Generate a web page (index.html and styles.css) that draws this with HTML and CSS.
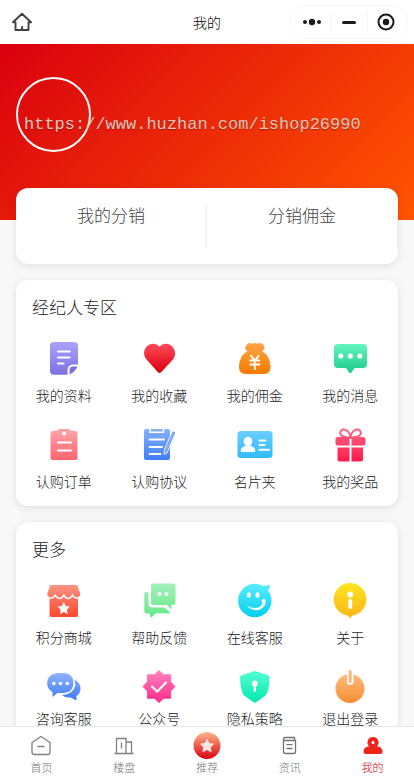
FILE: index.html
```
<!DOCTYPE html>
<html lang="zh-CN">
<head>
  <meta charset="UTF-8">
  <meta name="viewport" content="width=device-width, initial-scale=1.0">
  <title>我的</title>
  <link rel="stylesheet" href="styles.css">
</head>
<body>

  <header class="navbar">
    <button class="home-btn" type="button" aria-label="首页">
      <svg width="20" height="20" viewBox="0 0 20 20" fill="none" stroke="#404040" stroke-width="1.9" stroke-linejoin="round" stroke-linecap="round"><path d="M3.500 10.300H1L10 1.800l9 8.500H16.500V18H3.500zM10 17.500v-2.500"/></svg>
    </button>
    <h1>我的</h1>
    <div class="capsule">
      <button type="button" aria-label="更多操作">
        <svg width="20" height="20" viewBox="0 0 20 20" fill="#1a1a1a"><circle cx="3" cy="10" r="2"/><circle cx="10" cy="10" r="3.200"/><circle cx="17" cy="10" r="2"/></svg>
      </button>
      <button type="button" aria-label="最小化">
        <svg width="20" height="20" viewBox="0 0 20 20"><path d="M4.500 10.500h11" stroke="#1a1a1a" stroke-width="3" stroke-linecap="round"/></svg>
      </button>
      <button type="button" aria-label="关闭">
        <svg width="20" height="20" viewBox="0 0 20 20"><circle cx="10" cy="10" r="7.500" fill="none" stroke="#1a1a1a" stroke-width="2"/><circle cx="10" cy="10" r="3.200" fill="#1a1a1a"/></svg>
      </button>
    </div>
  </header>

  <main class="content">
    <div class="banner">
      <div class="avatar"></div>
      <p class="watermark">https://www.huzhan.com/ishop26990</p>
    </div>

    <nav class="card summary">
      <a href="#">我的分销</a>
      <a href="#">分销佣金</a>
    </nav>

    <section class="card">
      <h2>经纪人专区</h2>
      <div class="grid">
        <a href="#">
          <svg viewBox="0 0 36 36">
            <defs><linearGradient id="g-purple" x2="0" y2="1"><stop stop-color="#aca1fb"/><stop offset="1" stop-color="#7d70e0"/></linearGradient></defs>
            <path fill="url(#g-purple)" d="M8 2h20a4 4 0 0 1 4 4v18.500h-5a5.500 5.500 0 0 0-5.500 5.500v4.800H8a4 4 0 0 1-4-4V6a4 4 0 0 1 4-4z"/>
            <path fill="#7d70e0" d="M23.500 34.300V30a3.500 3.500 0 0 1 3.500-3.500h4.500q-1 2-3 4.500t-5 3.300z"/>
            <path stroke="#fff" stroke-width="2.200" stroke-linecap="round" d="M12 11.500h11.500M12 17.500h11.500M12 23.500h5.500"/>
          </svg>
          我的资料
        </a>
        <a href="#">
          <svg viewBox="0 0 36 36">
            <defs><linearGradient id="g-heart" x2="0" y2="1"><stop stop-color="#ff4a59"/><stop offset="1" stop-color="#db000c"/></linearGradient></defs>
            <path fill="url(#g-heart)" d="M18.500 6.800C15 2.500 8.500 3.200 5.300 7 2 11 2.600 16.500 6 20l10.700 12q1.800 2 3.600 0L31.500 20c3.200-3.500 3.500-9 .2-13-3.200-3.800-9.700-4.500-13.200-.200z"/>
          </svg>
          我的收藏
        </a>
        <a href="#">
          <svg viewBox="0 0 36 36">
            <defs><linearGradient id="g-bag" x2="0" y2="1"><stop stop-color="#ffa446"/><stop offset="1" stop-color="#f67b00"/></linearGradient></defs>
            <path fill="url(#g-bag)" d="M11 3.500q2.500-1 4.500.300 2.500-1.500 5 0 2-1.300 4.500-.300 3 2 2.300 5-.300 1.700-2.300 2.700 8.500 4.300 8.500 15.800 0 7-6.500 7H8.500q-6.500 0-6.500-7 0-11.500 8.500-15.800-2-1-2.300-2.700-.400-3 2.800-5z"/>
            <path fill="none" stroke="#fff" stroke-width="1.900" stroke-linecap="round" d="m14 15.800 3.800 4.700 3.800-4.700M13.300 20.500h9M13.300 24.500h9M17.800 20.500V29"/>
          </svg>
          我的佣金
        </a>
        <a href="#">
          <svg viewBox="0 0 36 36">
            <defs><linearGradient id="g-msg" x2="0" y2="1"><stop stop-color="#64f5c0"/><stop offset="1" stop-color="#1bc98b"/></linearGradient></defs>
            <path fill="url(#g-msg)" d="M6 4h25a4 4 0 0 1 4 4v16a4 4 0 0 1-4 4h-8.500l-3 4.500q-1.200 1.200-2.400 0l-3-4.500H6a4 4 0 0 1-4-4V8a4 4 0 0 1 4-4z"/>
            <g fill="#fff"><circle cx="8.700" cy="16" r="2.600"/><circle cx="18.300" cy="16" r="2.600"/><circle cx="27.900" cy="16" r="2.600"/></g>
          </svg>
          我的消息
        </a>
        <a href="#">
          <svg viewBox="0 0 36 36">
            <defs><linearGradient id="g-order" x2="0" y2="1"><stop stop-color="#ffa5aa"/><stop offset="1" stop-color="#ff6571"/></linearGradient></defs>
            <path fill="url(#g-order)" d="M6.500 5H11q.500-2 2.500-2h9q2 0 2.500 2h4.500q2 0 2 2v25q0 2-2 2h-23q-2 0-2-2V7q0-2 2-2z"/>
            <circle cx="18" cy="7.500" r="2" fill="#fff"/>
            <path stroke="#fff" stroke-width="2.200" stroke-linecap="round" d="M12 16.500h13M12 24.500h13"/>
          </svg>
          认购订单
        </a>
        <a href="#">
          <svg viewBox="0 0 36 36">
            <defs><linearGradient id="g-deal" x2="0" y2="1"><stop stop-color="#86b1ff"/><stop offset="1" stop-color="#3f7dfb"/></linearGradient></defs>
            <rect x="3" y="3" width="26" height="31" rx="2" fill="url(#g-deal)"/>
            <path fill="none" stroke="#fff" stroke-width="1.500" d="M9 2.500v3.800h13.500V2.500"/>
            <path stroke="#fff" stroke-width="1.800" stroke-linecap="round" d="M8.500 13.500H23M8.500 21H21M8.500 28h11"/>
            <path fill="#72a2fc" stroke="#fff" stroke-width="3" stroke-linejoin="round" d="M32 6.200 24.500 24l-.500 3 2-2.500L33.500 6.800z"/>
            <path fill="#fff" stroke="#72a2fc" stroke-width="1.400" stroke-linejoin="round" d="M32 6.200 24.500 24l-.500 3 2-2.500L33.500 6.800z"/>
          </svg>
          认购协议
        </a>
        <a href="#">
          <svg viewBox="0 0 36 36">
            <defs><linearGradient id="g-id" x2="0" y2="1"><stop stop-color="#69cdff"/><stop offset="1" stop-color="#32bbff"/></linearGradient></defs>
            <rect x=".500" y="5" width="35" height="27" rx="3.500" fill="url(#g-id)"/>
            <ellipse cx="11" cy="15.500" rx="4.300" ry="4.700" fill="#fff"/>
            <path fill="#fff" d="M8.500 17h5v3q4.500 1 4.800 4.500 0 1.500-1.300 1.500H5q-1.300 0-1.300-1.500Q4 21 8.500 20z"/>
            <path stroke="#fff" stroke-width="1.900" stroke-linecap="round" d="M22.500 14.500h6M22.500 19h5M22.500 23.700H32"/>
          </svg>
          名片夹
        </a>
        <a href="#">
          <svg viewBox="0 0 36 36">
            <defs><linearGradient id="g-gift" gradientUnits="userSpaceOnUse" x1="0" y1="2" x2="0" y2="35"><stop stop-color="#ff6889"/><stop offset="1" stop-color="#ff1b4e"/></linearGradient></defs>
            <path fill="none" stroke="url(#g-gift)" stroke-width="2" d="M18.500 12C15 11 10.500 11.500 8.800 8.800 7 6 9.500 2.800 12.500 3.500 16 4.500 18.500 8 18.500 12c0-4 2.500-7.500 6-8.500 3-.700 5.500 2.500 3.700 5.300C26.500 11.500 22 11 18.500 12z"/>
            <path fill="url(#g-gift)" d="M5.500 11H17.500v8.500H5.500q-2 0-2-2V13q0-2 2-2zM19.500 11h12q2 0 2 2v4.500q0 2-2 2h-12zM5.500 21.500h12v14h-10q-2 0-2-2zM19.500 21.500h11.500v12q0 2-2 2h-9.500z"/>
          </svg>
          我的奖品
        </a>
      </div>
    </section>

    <section class="card more">
      <h2>更多</h2>
      <div class="grid">
        <a href="#">
          <svg viewBox="0 0 36 36">
            <defs><linearGradient id="g-shop" gradientUnits="userSpaceOnUse" x1="0" y1="3" x2="0" y2="35"><stop stop-color="#ff9383"/><stop offset="1" stop-color="#fb472e"/></linearGradient></defs>
            <path fill="url(#g-shop)" d="M3.500 14.500h28.500V33q0 2-2 2h-24.500q-2 0-2-2z"/>
            <path fill="url(#g-shop)" stroke="#fff" stroke-width="1.500" d="M5.500 2.300h24.500q2 0 2.500 2L35 11.500q.300 4-4 4.500-3 0-4.500-3-2 3.500-4.500 3.500T17.800 13q-2 3.500-4.300 3.500T9.200 13q-1.500 3-4.500 3-4.500-.500-4.200-4.500L3 4.300q.500-2 2.500-2z"/>
            <path fill="#fff" d="m17.800 20 1.900 4 4.300.600-3.100 3.100.700 4.300-3.800-2-3.800 2 .700-4.300-3.100-3.100 4.300-.600z"/>
          </svg>
          积分商城
        </a>
        <a href="#">
          <svg viewBox="0 0 36 36">
            <defs><linearGradient id="g-help" gradientUnits="userSpaceOnUse" x1="0" y1="1" x2="0" y2="35"><stop stop-color="#a4f1ba"/><stop offset="1" stop-color="#69e88b"/></linearGradient></defs>
            <path fill="url(#g-help)" d="M12.500 1.500h19.500q2.500 0 2.500 2.500v16.500q0 2.500-2.500 2.500H30.500v4.500L26 23H12.500Q10 23 10 20.500V4q0-2.500 2.500-2.500z"/>
            <path fill="url(#g-help)" d="M5.500 9.800q2 0 2 2v9.700q0 4 4 4h12l5.500 4.500q-.300 1.500-2 1.500H14.500L10.500 35.500 9 34.500V31.500H5.500q-2.200 0-2.200-2.200V12q0-2.200 2.200-2.200z"/>
            <circle cx="18.500" cy="12" r="2" fill="#fff"/><circle cx="25.500" cy="12" r="2" fill="#fff"/>
          </svg>
          帮助反馈
        </a>
        <a href="#">
          <svg viewBox="0 0 36 36">
            <defs><linearGradient id="g-smile" x2="0" y2="1"><stop stop-color="#5bedfd"/><stop offset="1" stop-color="#00d0ed"/></linearGradient></defs>
            <path fill="url(#g-smile)" d="M17.800 1.800q4.200 0 8 2Q30 4 33.300 3q-.500 3-2.300 5.800 3.500 4 3.500 9.700A16.700 16.700 0 1 1 17.800 1.800z"/>
            <ellipse cx="12" cy="13" rx="2" ry="2.800" fill="#fff"/><ellipse cx="20.500" cy="13" rx="2" ry="2.800" fill="#fff"/>
            <path fill="#fff" d="M9.500 23.500q8 4.500 13.500 1 3-2 2-4.500a2 2 0 1 1 3.600-1q.500 5.500-5.300 8.300-7.500 2.800-13.800-3.800z"/>
          </svg>
          在线客服
        </a>
        <a href="#">
          <svg viewBox="0 0 36 36">
            <defs><linearGradient id="g-info" x2="0" y2="1"><stop stop-color="#fee51f"/><stop offset="1" stop-color="#feb515"/></linearGradient></defs>
            <path fill="url(#g-info)" d="M18 1a16.400 16.400 0 0 1 2.500 32.600L18 36l-2.500-2.400A16.400 16.400 0 0 1 18 1z"/>
            <circle cx="18.200" cy="12.500" r="2.900" fill="#fff"/><rect x="16.200" y="17" width="4" height="10" rx="2" fill="#fff"/>
          </svg>
          关于
        </a>
        <a href="#">
          <svg viewBox="0 0 36 36">
            <defs><linearGradient id="g-chat" gradientUnits="userSpaceOnUse" x1="0" y1="5" x2="0" y2="32"><stop stop-color="#8fb4ff"/><stop offset="1" stop-color="#3d7cfa"/></linearGradient></defs>
            <path fill="url(#g-chat)" d="M28 11.500q6.500 3 6.500 9 0 4.500-4 7.500v4.500L24.500 29.500q-5 .500-8.500-2.300Q27.500 26 29.500 17z"/>
            <path fill="url(#g-chat)" stroke="#fff" stroke-width="1.200" d="M11 4.500h7.500q9.500 1 9.500 10.500t-9.500 10.500h-7L6 30.500V24.500Q.500 21.500.500 15 .500 6 11 4.500z"/>
            <g fill="#fff"><circle cx="7.800" cy="15.500" r="1.800"/><circle cx="14.500" cy="15.500" r="1.800"/><circle cx="21.300" cy="15.500" r="1.800"/></g>
          </svg>
          咨询客服
        </a>
        <a href="#">
          <svg viewBox="0 0 36 36">
            <defs><linearGradient id="g-badge" x2="0" y2="1"><stop stop-color="#ff83bd"/><stop offset="1" stop-color="#ff2a8b"/></linearGradient></defs>
            <path fill="url(#g-badge)" stroke="url(#g-badge)" stroke-linejoin="round" d="m18 2.500 4.600 4.300h7v7l4.400 4.700-4.400 4.700v7h-7L18 34.500l-4.600-4.300h-7v-7L2 18.500l4.400-4.700v-7h7z"/>
            <path fill="none" stroke="#fff" stroke-width="2.200" stroke-linecap="round" d="m11 18.500 5.200 5L25 14.500"/>
          </svg>
          公众号
        </a>
        <a href="#">
          <svg viewBox="0 0 36 36">
            <defs><linearGradient id="g-shield" x2="0" y2="1"><stop stop-color="#55ffd4"/><stop offset="1" stop-color="#00e9ae"/></linearGradient></defs>
            <path fill="url(#g-shield)" d="M16.800 3.200q1-.400 2 0l12 4q1.700.600 1.700 2.300-.200 10-2.700 16-1 1.800-2.300 2.700l-8.500 6q-1.200.800-2.400 0l-8.500-6q-1.500-1-2.300-2.700-2.500-6-2.700-16Q3.100 7.800 4.800 7.200z"/>
            <circle cx="17.800" cy="15.500" r="2.900" fill="#fff"/><path stroke="#fff" stroke-width="2.200" stroke-linecap="round" d="M17.800 16v7"/>
          </svg>
          隐私策略
        </a>
        <a href="#">
          <svg viewBox="0 0 36 36">
            <defs><linearGradient id="g-power" gradientUnits="userSpaceOnUse" x1="0" y1="2" x2="0" y2="35"><stop stop-color="#ffc28b"/><stop offset="1" stop-color="#f68e30"/></linearGradient></defs>
            <circle cx="18" cy="20.500" r="14.500" fill="url(#g-power)"/>
            <path stroke="#fff" stroke-width="6.500" stroke-linecap="round" d="M18.200 3.500v10"/>
            <path stroke="#fdb577" stroke-width="3" stroke-linecap="round" d="M18.200 3.500v10"/>
          </svg>
          退出登录
        </a>
      </div>
    </section>
  </main>

  <nav class="tabbar">
    <a href="#">
      <svg viewBox="0 0 28 28" fill="none" stroke="#808080" stroke-width="1.300" stroke-linejoin="round"><path d="M5 10.500 14 4.500l9 6V20q0 2.500-2.500 2.500h-13Q5 22.500 5 20zM10.500 14.500h7"/></svg>
      首页
    </a>
    <a href="#">
      <svg viewBox="0 0 28 28" fill="none" stroke="#808080" stroke-width="1.300"><path d="M4.500 21.500h19M6.500 21.500v-15h9.500v15M16 10h5.500v11.500M11.500 10.500v6"/></svg>
      楼盘
    </a>
    <a href="#">
      <svg viewBox="0 0 28 28">
        <defs><linearGradient id="g-star" x2="0" y2="1"><stop stop-color="#ffb98e"/><stop offset="1" stop-color="#db000e"/></linearGradient></defs>
        <circle cx="14" cy="13.500" r="13.500" fill="url(#g-star)"/>
        <path fill="#ffe6e4" stroke="#ffe6e4" stroke-linejoin="round" d="m14 7.500 2 4 4.400.600-3.200 3.100.800 4.400-4-2.100-4 2.100.800-4.400-3.200-3.100 4.400-.600z"/>
      </svg>
      推荐
    </a>
    <a href="#">
      <svg viewBox="0 0 28 28" fill="none" stroke="#737373" stroke-width="1.300"><path d="M7.500 7v12.500q0 2 2 2h8q2 0 2-2v-11H9Q7.500 8.500 7.500 7T9 5.500h9.500v3M10.500 12.700h6M10.500 16.500h6"/></svg>
      资讯
    </a>
    <a href="#" class="active">
      <svg viewBox="0 0 28 28" fill="#f0221c"><path d="M14 5a5.500 5.500 0 0 1 4 9.300q5.500 1 5.500 5.200 0 2.500-2.500 2.500H7q-2.500 0-2.500-2.500 0-4.200 5.500-5.200A5.500 5.500 0 0 1 14 5z"/><circle cx="14" cy="10.500" r="1.500" fill="#fff"/></svg>
      我的
    </a>
  </nav>

</body>
</html>
```

FILE: styles.css
```
* {
  box-sizing: border-box;
  margin: 0;
  padding: 0;
}

body {
  display: flex;
  flex-direction: column;
  height: 100vh;
  background: #f8f8f8;
  color: #222;
  font-family: "Noto Sans CJK SC", sans-serif;
  font-weight: 300;
}

a {
  color: inherit;
  text-decoration: none;
}

button {
  border: none;
  background: none;
  cursor: pointer;
}

svg {
  display: block;
}

/* Top bar */
.navbar {
  display: grid;
  grid-template-columns: 1fr auto 1fr;
  align-items: center;
  height: 44px;
  padding: 0 6px;
  background: #fff;
  flex-shrink: 0;
}

.navbar h1 {
  font-size: 14px;
  font-weight: 300;
  line-height: 20px;
  color: #000;
}

.home-btn {
  justify-self: start;
  padding-left: 6px;
}

.capsule {
  justify-self: end;
  display: flex;
  align-items: center;
  height: 34px;
  padding: 0 3px;
  border: 1px solid #f5f5f5;
  border-radius: 17px;
}

.capsule button {
  display: flex;
  justify-content: center;
  width: 37px;
}

.capsule button + button {
  border-left: 1px solid #f5f5f5;
}

/* Page */
.content {
  flex: 1;
  min-height: 0;
  overflow-y: auto;
  scrollbar-width: none;
}

.banner {
  position: relative;
  height: 176px;
  padding: 33px 16px;
  background: linear-gradient(135deg, #d9000f, #ff5500);
}

.avatar {
  width: 75px;
  height: 75px;
  border: 2px solid #fff;
  border-radius: 50%;
}

.watermark {
  position: absolute;
  top: 70px;
  left: 24px;
  font-family: "Liberation Mono", monospace;
  font-size: 17px;
  line-height: 22px;
  color: #e4c4bc;
  text-shadow: 0 1px 1px rgba(80, 0, 0, 0.4);
}

.card {
  margin: 0 16px 16px;
  padding: 16px 0 15px;
  background: #fff;
  border-radius: 12px;
  box-shadow: 0 2px 8px rgba(0, 0, 0, 0.1);
}

.card h2 {
  margin: 0 16px 22px;
  font-size: 17px;
  font-weight: 300;
  line-height: 22px;
}

.summary {
  position: relative;
  display: flex;
  margin-top: -32px;
  padding: 16px 0;
}

.summary a {
  flex: 1;
  height: 44px;
  border-right: 1px solid #eee;
  text-align: center;
  font-size: 17px;
  line-height: 22px;
  color: #444;
}

.grid {
  display: grid;
  grid-template-columns: repeat(4, 1fr);
  row-gap: 21px;
}

.grid a {
  display: flex;
  flex-direction: column;
  align-items: center;
  gap: 9px;
  font-size: 14px;
  line-height: 20px;
}

.grid svg {
  width: 36px;
  height: 36px;
}

.more .grid a:nth-child(n + 5) {
  gap: 4px;
}

/* Bottom tabs */
.tabbar {
  display: flex;
  padding: 5px 0 6px;
  background: #fff;
  border-top: 1px solid #e8e8e8;
  flex-shrink: 0;
}

.tabbar a {
  flex: 1;
  display: flex;
  flex-direction: column;
  align-items: center;
  font-size: 11px;
  line-height: 14px;
  color: #777;
}

.tabbar svg {
  width: 28px;
  height: 28px;
}

.tabbar .active {
  color: #d9000f;
}
```
